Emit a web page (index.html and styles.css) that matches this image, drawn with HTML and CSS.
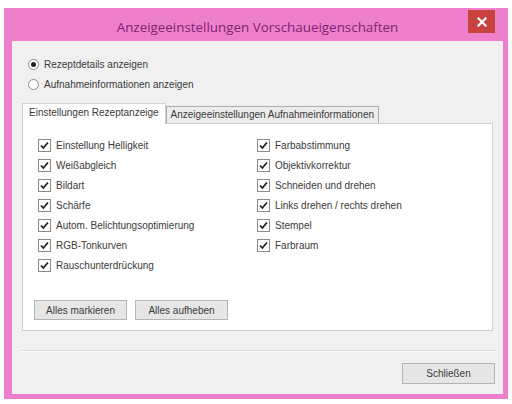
FILE: index.html
```html
<!DOCTYPE html>
<html lang="de">
<head>
<meta charset="utf-8">
<title>Anzeigeeinstellungen Vorschaueigenschaften</title>
<link rel="stylesheet" href="styles.css">
</head>
<body>
<div class="window">
  <div class="titlebar">
    <span></span>
    <div class="title">Anzeigeeinstellungen Vorschaueigenschaften</div>
    <div class="close"><svg width="10" height="10" viewBox="0 0 10 10"><path d="M1.5 1.5 L8.5 8.5 M8.5 1.5 L1.5 8.5" stroke="#fff" stroke-width="2.2" stroke-linecap="square"/></svg></div>
  </div>
  <div class="client">
    <div class="radios">
      <label class="radio"><span class="rbox checked"></span>Rezeptdetails anzeigen</label>
      <label class="radio"><span class="rbox"></span>Aufnahmeinformationen anzeigen</label>
    </div>
    <div class="tabs">
      <div class="tab active">Einstellungen Rezeptanzeige</div>
      <div class="tab">Anzeigeeinstellungen Aufnahmeinformationen</div>
    </div>
    <div class="panel">
      <div class="cols">
        <div class="col">
          <div class="cb"><svg class="box" width="13" height="13" viewBox="0 0 13 13"><rect x="0.5" y="0.5" width="12" height="12" fill="#fff" stroke="#8a8a8a"/><path d="M3 6.5 L5.3 9 L10 3.5" fill="none" stroke="#222" stroke-width="1.8"/></svg>Einstellung Helligkeit</div>
          <div class="cb"><svg class="box" width="13" height="13" viewBox="0 0 13 13"><rect x="0.5" y="0.5" width="12" height="12" fill="#fff" stroke="#8a8a8a"/><path d="M3 6.5 L5.3 9 L10 3.5" fill="none" stroke="#222" stroke-width="1.8"/></svg>Weißabgleich</div>
          <div class="cb"><svg class="box" width="13" height="13" viewBox="0 0 13 13"><rect x="0.5" y="0.5" width="12" height="12" fill="#fff" stroke="#8a8a8a"/><path d="M3 6.5 L5.3 9 L10 3.5" fill="none" stroke="#222" stroke-width="1.8"/></svg>Bildart</div>
          <div class="cb"><svg class="box" width="13" height="13" viewBox="0 0 13 13"><rect x="0.5" y="0.5" width="12" height="12" fill="#fff" stroke="#8a8a8a"/><path d="M3 6.5 L5.3 9 L10 3.5" fill="none" stroke="#222" stroke-width="1.8"/></svg>Schärfe</div>
          <div class="cb"><svg class="box" width="13" height="13" viewBox="0 0 13 13"><rect x="0.5" y="0.5" width="12" height="12" fill="#fff" stroke="#8a8a8a"/><path d="M3 6.5 L5.3 9 L10 3.5" fill="none" stroke="#222" stroke-width="1.8"/></svg>Autom. Belichtungsoptimierung</div>
          <div class="cb"><svg class="box" width="13" height="13" viewBox="0 0 13 13"><rect x="0.5" y="0.5" width="12" height="12" fill="#fff" stroke="#8a8a8a"/><path d="M3 6.5 L5.3 9 L10 3.5" fill="none" stroke="#222" stroke-width="1.8"/></svg>RGB-Tonkurven</div>
          <div class="cb"><svg class="box" width="13" height="13" viewBox="0 0 13 13"><rect x="0.5" y="0.5" width="12" height="12" fill="#fff" stroke="#8a8a8a"/><path d="M3 6.5 L5.3 9 L10 3.5" fill="none" stroke="#222" stroke-width="1.8"/></svg>Rauschunterdrückung</div>
        </div>
        <div class="col">
          <div class="cb"><svg class="box" width="13" height="13" viewBox="0 0 13 13"><rect x="0.5" y="0.5" width="12" height="12" fill="#fff" stroke="#8a8a8a"/><path d="M3 6.5 L5.3 9 L10 3.5" fill="none" stroke="#222" stroke-width="1.8"/></svg>Farbabstimmung</div>
          <div class="cb"><svg class="box" width="13" height="13" viewBox="0 0 13 13"><rect x="0.5" y="0.5" width="12" height="12" fill="#fff" stroke="#8a8a8a"/><path d="M3 6.5 L5.3 9 L10 3.5" fill="none" stroke="#222" stroke-width="1.8"/></svg>Objektivkorrektur</div>
          <div class="cb"><svg class="box" width="13" height="13" viewBox="0 0 13 13"><rect x="0.5" y="0.5" width="12" height="12" fill="#fff" stroke="#8a8a8a"/><path d="M3 6.5 L5.3 9 L10 3.5" fill="none" stroke="#222" stroke-width="1.8"/></svg>Schneiden und drehen</div>
          <div class="cb"><svg class="box" width="13" height="13" viewBox="0 0 13 13"><rect x="0.5" y="0.5" width="12" height="12" fill="#fff" stroke="#8a8a8a"/><path d="M3 6.5 L5.3 9 L10 3.5" fill="none" stroke="#222" stroke-width="1.8"/></svg>Links drehen / rechts drehen</div>
          <div class="cb"><svg class="box" width="13" height="13" viewBox="0 0 13 13"><rect x="0.5" y="0.5" width="12" height="12" fill="#fff" stroke="#8a8a8a"/><path d="M3 6.5 L5.3 9 L10 3.5" fill="none" stroke="#222" stroke-width="1.8"/></svg>Stempel</div>
          <div class="cb"><svg class="box" width="13" height="13" viewBox="0 0 13 13"><rect x="0.5" y="0.5" width="12" height="12" fill="#fff" stroke="#8a8a8a"/><path d="M3 6.5 L5.3 9 L10 3.5" fill="none" stroke="#222" stroke-width="1.8"/></svg>Farbraum</div>
        </div>
      </div>
      <div class="btnrow">
        <button class="btn">Alles markieren</button>
        <button class="btn">Alles aufheben</button>
      </div>
    </div>
    <div class="sep"></div>
    <div class="footer">
      <button class="btn close-btn">Schließen</button>
    </div>
  </div>
</div>
</body>
</html>
```

FILE: styles.css
```css
html, body {
  margin: 0;
  padding: 0;
  background: #fdfdfd;
}
body {
  font-family: "Liberation Sans", Arial, sans-serif;
  font-size: 10px;
  color: #3a3a3a;
}
.window {
  margin: 8px 0 0 4px;
  width: 504px;
  height: 391px;
  box-sizing: border-box;
  background: #ee7fcb;
  padding: 0 5px 5px 8px;
  display: flex;
  flex-direction: column;
}
.titlebar {
  height: 35px;
  display: grid;
  grid-template-columns: 1fr auto 1fr;
  align-items: start;
}
.title {
  font-family: "Open Sans", "Noto Sans", sans-serif;
  font-size: 13.4px;
  color: #7e2470;
  line-height: 20px;
  margin-top: 9px;
  white-space: nowrap;
}
.close {
  justify-self: end;
  width: 27px;
  height: 23px;
  margin: 2px 8px 0 0;
  background: #c8433f;
  display: flex;
  align-items: center;
  justify-content: center;
}
.client {
  flex: 1;
  background: #f0f0f0;
  display: flex;
  flex-direction: column;
  padding: 13px 0 10px 0;
}
.radios {
  display: flex;
  flex-direction: column;
  padding-left: 16px;
}
.radio {
  height: 20px;
  display: flex;
  align-items: center;
  gap: 5px;
}
.rbox {
  width: 11px;
  height: 11px;
  border: 1px solid #8a8a8a;
  border-radius: 50%;
  background: #fff;
  box-sizing: border-box;
  display: flex;
  align-items: center;
  justify-content: center;
}
.rbox.checked::after {
  content: "";
  width: 5px;
  height: 5px;
  border-radius: 50%;
  background: #222;
}
.tabs {
  display: flex;
  align-items: flex-end;
  margin: 9px 0 0 10px;
  height: 20px;
}
.tab {
  height: 16px;
  line-height: 16px;
  padding: 0 4px;
  border: 1px solid #adadad;
  border-bottom: none;
  background: #ececec;
  white-space: nowrap;
}
.tab.active {
  height: 20px;
  line-height: 18px;
  padding: 0 6px;
  background: #fff;
  border-color: #cfcfcf;
  position: relative;
  z-index: 1;
  margin-bottom: -1px;
}
.panel {
  margin: 0 10px 0 10px;
  height: 208px;
  box-sizing: border-box;
  background: #fff;
  border: 1px solid #cfcfcf;
  padding: 11px 0 0 15px;
  display: flex;
  flex-direction: column;
}
.cols {
  display: flex;
}
.col {
  display: flex;
  flex-direction: column;
}
.col:first-child {
  width: 219px;
}
.cb {
  height: 20px;
  display: flex;
  align-items: center;
  gap: 5px;
  white-space: nowrap;
}
.box {
  flex: none;
}
.btnrow {
  display: flex;
  gap: 8px;
  margin-top: 25px;
  margin-left: -4px;
}
.btn {
  font-family: "Liberation Sans", Arial, sans-serif;
  font-size: 10px;
  color: #3a3a3a;
  height: 20px;
  width: 93px;
  padding: 0;
  background: #e6e6e6;
  border: 1px solid #b5b5b5;
  border-radius: 0;
}
.sep {
  margin: 19px 8px 0 10px;
  height: 1px;
  background: #d5d5d5;
  border-bottom: 1px solid #fff;
}
.footer {
  display: flex;
  justify-content: flex-end;
  margin-top: 11px;
  padding-right: 8px;
}
.close-btn {
  height: 21px;
}
```
